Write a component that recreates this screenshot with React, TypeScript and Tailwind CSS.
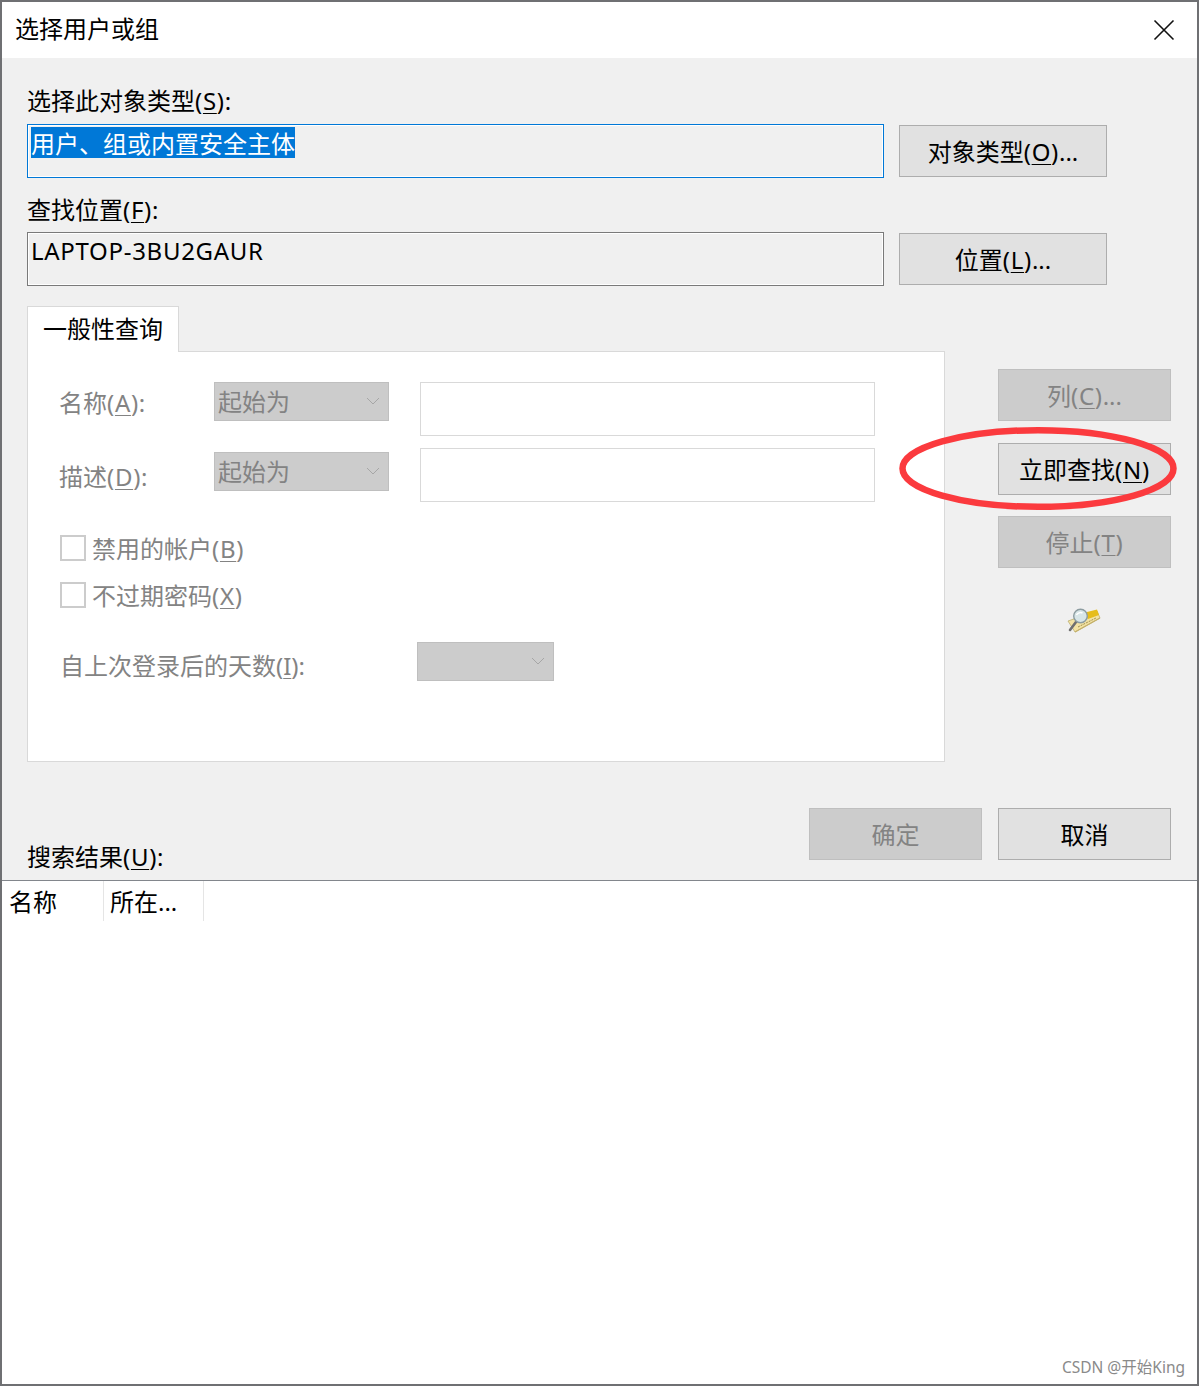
const FONT = "font-['Noto_Sans','Noto_Sans_CJK_SC',sans-serif]";

// access key in parens, e.g. (S) - latin runs a bit wider than Noto Sans
function Key({ children }: { children: string }) {
  return (
    <span className="tracking-[0.7px]">
      (<span className="underline underline-offset-[3px] decoration-1">{children}</span>)
    </span>
  );
}

function Btn({ disabled, className, children }: { disabled?: boolean; className: string; children: React.ReactNode }) {
  return (
    <div
      className={`h-[52px] pt-[1px] flex items-center justify-center border text-[24px] leading-none ${
        disabled ? "bg-[#cccccc] border-[#bfbfbf] text-[#838383]" : "bg-[#e1e1e1] border-[#adadad] text-black"
      } ${className}`}
    >
      {children}
    </div>
  );
}

function Dropdown({ text, className }: { text?: string; className: string }) {
  return (
    <div className={`h-[39px] bg-[#cccccc] border border-[#bfbfbf] flex items-center justify-between pl-[3px] pr-[8px] text-[24px] text-[#838383] ${className}`}>
      <span className="leading-none">{text}</span>
      <svg width="14" height="9" viewBox="0 0 14 9" fill="none" stroke="#a6a6a6" strokeWidth="1">
        <path d="M1 1l6 6 6-6" />
      </svg>
    </div>
  );
}

function Check({ children }: { children: React.ReactNode }) {
  return (
    <div className="flex items-center h-[26px] pl-px text-[24px] text-[#838383]">
      <div className="w-[26px] h-[26px] border-2 border-[#cccccc] bg-white mr-[6px]" />
      <span className="pt-[2px]">{children}</span>
    </div>
  );
}

function SearchIcon() {
  return (
    <svg width="34" height="26" viewBox="0 0 34 26">
      <path d="M1 13 L30 3 L33 10 L8 24 Z" fill="#f3e3a4" stroke="#bcae70" strokeWidth="0.8" />
      <path d="M16 5 L30 1.5 L32 7 L21 11 Z" fill="#e6bd1c" />
      <path d="M8 24 L33 10" stroke="#c4b06a" strokeWidth="1.2" />
      <path d="M11 19 L29 10" stroke="#a08f50" strokeWidth="1" strokeDasharray="2 1" />
      <path d="M9 14 L3 22" stroke="#707070" strokeWidth="2.6" strokeLinecap="round" />
      <circle cx="13.5" cy="8" r="6.8" fill="#d8e6e8" stroke="#8c9ca0" strokeWidth="1.4" />
      <path d="M9.5 7c1-2 4-3 6-2" stroke="#fff" strokeWidth="1.5" fill="none" />
    </svg>
  );
}

export default function App() {
  return (
    <div className={`w-[1199px] h-[1386px] border-2 border-[#6f7073] flex flex-col overflow-hidden relative bg-white text-black ${FONT}`}>
      <div className="h-[56px] shrink-0 bg-white flex items-center justify-between pl-[13px] pr-[22px]">
        <span className="text-[24px] leading-none pb-[2px]">选择用户或组</span>
        <svg width="22" height="22" viewBox="0 0 22 22" stroke="#111" strokeWidth="1.6" fill="none">
          <path d="M1.5 1.5l19 19M20.5 1.5l-19 19" />
        </svg>
      </div>

      <div className="h-[822px] shrink-0 bg-[#f0f0f0] pl-[25px] pt-[27px] flex flex-col">
        <div className="h-[39px] text-[24px] leading-[32px]">
          选择此对象类型<Key>S</Key>:
        </div>
        <div className="flex items-start">
          <div className="w-[857px] h-[54px] bg-[#f0f0f0] border border-[#0078d7] shadow-[inset_0_0_0_1px_#fff] pl-[3px] pt-[2px] text-[24px]">
            <span className="block w-fit bg-[#0078d7] text-white h-[31px] leading-[33px]">用户、组或内置安全主体</span>
          </div>
          <Btn className="w-[208px] ml-[15px] mt-px">
            <span>对象类型<Key>O</Key>...</span>
          </Btn>
        </div>
        <div className="h-[38px] mt-[16px] text-[24px] leading-[32px]">
          查找位置<Key>F</Key>:
        </div>
        <div className="flex items-start">
          <div className="w-[857px] h-[54px] bg-[#f0f0f0] border border-[#7a7a7a] shadow-[inset_0_0_0_1px_#fff] pl-[3px] pt-[2px] text-[24px] leading-[31px] tracking-[0.7px]">
            LAPTOP-3BU2GAUR
          </div>
          <Btn className="w-[208px] ml-[15px] mt-px">
            <span>位置<Key>L</Key>...</span>
          </Btn>
        </div>

        <div className="flex items-start mt-[20px]">
          <div className="w-[918px] flex flex-col shrink-0">
            <div className="w-[152px] h-[46px] pb-[2px] -mb-px z-10 bg-white border border-[#d9d9d9] border-b-0 flex items-center justify-center text-[24px] leading-none">
              一般性查询
            </div>
            <div className="h-[411px] bg-white border border-[#d9d9d9] pl-[31px] pt-[30px]">
              <div className="flex items-start h-[66px]">
                <div className="w-[155px] pt-[3px] text-[24px] text-[#838383]">名称<Key>A</Key>:</div>
                <Dropdown text="起始为" className="w-[175px]" />
                <div className="w-[455px] h-[54px] ml-[31px] border border-[#d9d9d9] bg-white" />
              </div>
              <div className="flex items-start h-[70px]">
                <div className="w-[155px] pt-[11px] text-[24px] text-[#838383]">描述<Key>D</Key>:</div>
                <Dropdown text="起始为" className="w-[175px] mt-[4px]" />
                <div className="w-[455px] h-[54px] ml-[31px] border border-[#d9d9d9] bg-white" />
              </div>
              <div className="mt-[17px] flex flex-col gap-[21px]">
                <Check>禁用的帐户<Key>B</Key></Check>
                <Check>不过期密码<Key>X</Key></Check>
              </div>
              <div className="flex items-start mt-[34px]">
                <div className="w-[358px] pl-px pt-[6px] text-[24px] text-[#838383]">自上次登录后的天数(<span className="underline underline-offset-[3px] decoration-1">I</span>):</div>
                <Dropdown className="w-[137px]" />
              </div>
            </div>
          </div>
          <div className="ml-[53px] pt-[63px] flex flex-col items-center w-[173px]">
            <Btn disabled className="w-[173px]">
              <span>列<Key>C</Key>...</span>
            </Btn>
            <Btn className="w-[173px] mt-[22px]">
              <span>立即查找<Key>N</Key></span>
            </Btn>
            <Btn disabled className="w-[173px] mt-[21px]">
              <span>停止<Key>T</Key></span>
            </Btn>
            <div className="mt-[40px] mr-[2px]">
              <SearchIcon />
            </div>
          </div>
        </div>

        <div className="relative flex-1">
          <div className="absolute left-0 bottom-[6px] text-[24px] leading-[34px]">
            搜索结果<Key>U</Key>:
          </div>
          <div className="flex justify-end pr-[26px] gap-[16px] pt-[46px]">
            <Btn disabled className="w-[173px]">确定</Btn>
            <Btn className="w-[173px]">取消</Btn>
          </div>
        </div>
      </div>

      <div className="flex-1 bg-white border-t border-[#82868c] relative">
        <div className="flex h-[40px] text-[24px] leading-[42px]">
          <div className="w-[102px] pl-[7px] border-r border-[#e5e5e5]">名称</div>
          <div className="w-[100px] pl-[6px] border-r border-[#e5e5e5]">所在...</div>
        </div>
        <span className="absolute right-[12px] bottom-[9px] text-[15.5px] leading-none text-[#8a8a8a]">CSDN @开始King</span>
      </div>

      <svg className="absolute left-[896px] top-[424px]" width="282" height="88" viewBox="0 0 282 88" fill="none">
        <ellipse cx="140" cy="42.5" rx="135.5" ry="38.3" stroke="#fb3a3e" strokeWidth="6.5" />
      </svg>
    </div>
  );
}
